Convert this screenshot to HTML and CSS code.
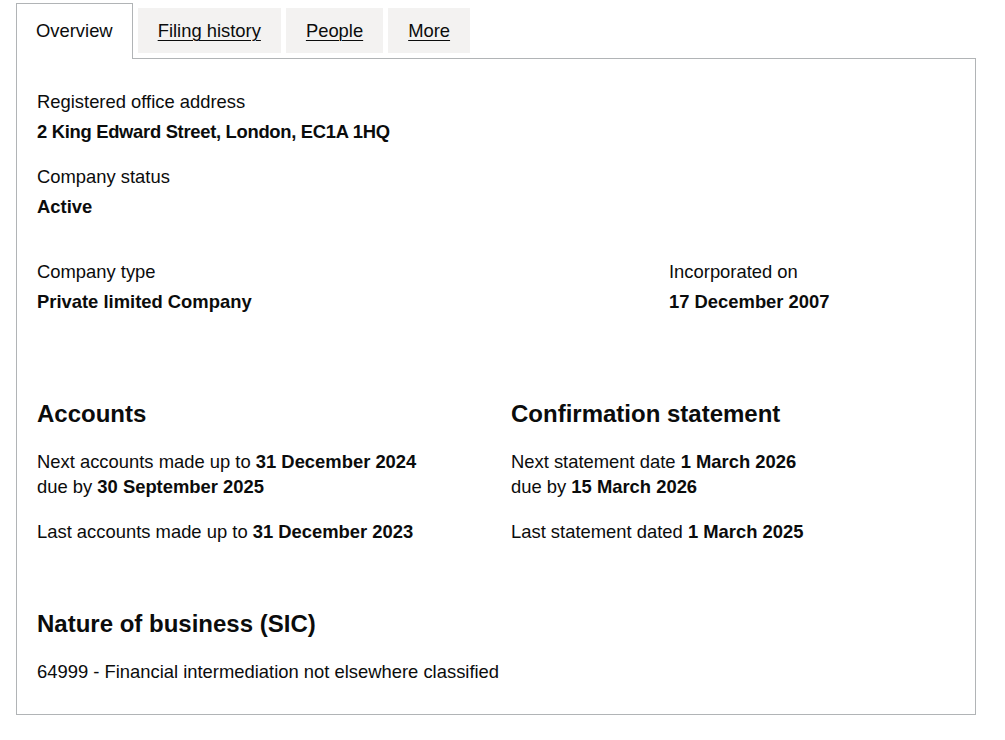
FILE: index.html
```html
<!DOCTYPE html>
<html lang="en">

<head>
    <meta charset="UTF-8">
    <meta name="viewport" content="width=device-width, initial-scale=1.0">
    <title>Company overview</title>
    <link rel="stylesheet" href="styles.css">
</head>

<body>

    <div class="page">
        <ul class="tabs">
            <li class="tab tab-selected"><a href="#overview">Overview</a></li>
            <li class="tab"><a href="#filing">Filing history</a></li>
            <li class="tab"><a href="#people">People</a></li>
            <li class="tab"><a href="#more">More</a></li>
        </ul>

        <div class="panel" id="overview">

            <!-- Address and status -->
            <dl class="details">
                <dt>Registered office address</dt>
                <dd>2 King Edward Street, London, EC1A 1HQ</dd>
                <dt>Company status</dt>
                <dd>Active</dd>
            </dl>

            <div class="row row-type">
                <dl class="col col-two-thirds">
                    <dt>Company type</dt>
                    <dd>Private limited Company</dd>
                </dl>
                <dl class="col col-one-third">
                    <dt>Incorporated on</dt>
                    <dd>17 December 2007</dd>
                </dl>
            </div>

            <!-- Accounts and confirmation statement -->
            <div class="row row-dates">
                <div class="col col-half">
                    <h2>Accounts</h2>
                    <p>Next accounts made up to <strong>31 December 2024</strong><br>
                        due by <strong>30 September 2025</strong></p>
                    <p>Last accounts made up to <strong>31 December 2023</strong></p>
                </div>
                <div class="col col-half">
                    <h2>Confirmation statement</h2>
                    <p>Next statement date <strong>1 March 2026</strong><br>
                        due by <strong>15 March 2026</strong></p>
                    <p>Last statement dated <strong>1 March 2025</strong></p>
                </div>
            </div>

            <h2>Nature of business (SIC)</h2>
            <p class="sic">64999 - Financial intermediation not elsewhere classified</p>
        </div>
    </div>

</body>
</html>
```

FILE: styles.css
```css
body {
    font-family: 'Liberation Sans', Arial, sans-serif;
    font-size: 18.4px;
    line-height: 25px;
    color: #0b0c0c;
    margin: 0;
    padding: 0;
    background-color: #fff;
}

.page {
    width: 960px;
    padding: 3px 0 0 16px;
}

/* Tabs */
.tabs {
    display: flex;
    align-items: flex-start;
    list-style: none;
    margin: 0;
    padding: 0;
}

.tab {
    margin: 5px 5px 5px 0;
    padding: 10px 20px;
    background-color: #f3f2f1;
}

.tab a {
    color: #0b0c0c;
    text-decoration: underline;
    text-decoration-thickness: 1px;
    text-underline-offset: 3px;
}

.tab-selected {
    position: relative;
    margin-top: 0;
    margin-bottom: -1px;
    padding: 14px 19px 16px;
    border: 1px solid #b1b4b6;
    border-bottom: 0;
    background-color: #fff;
}

.tab-selected a {
    text-decoration: none;
}

.panel {
    border: 1px solid #b1b4b6;
    padding: 30px 20px;
}

/* Details */
dl {
    margin: 0;
}

dt {
    margin-bottom: 5px;
}

dd {
    margin: 0 0 20px;
    font-weight: bold;
}

.details {
    margin-bottom: 40px;
}

.details dd:first-of-type {
    letter-spacing: -0.3px;
}

.row {
    display: flex;
    margin: 0 -15px;
}

.col {
    box-sizing: border-box;
    padding: 0 15px;
}

.col-two-thirds {
    width: 66.6667%;
}

.col-one-third {
    width: 33.3333%;
}

.col-half {
    width: 50%;
}

.row-type {
    margin-bottom: 65px;
}

.row-dates {
    margin-bottom: 45px;
}

h2 {
    font-family: 'Liberation Sans', Arial, sans-serif;
    font-size: 24px;
    line-height: 30px;
    margin: 0 0 20px;
}

p {
    margin: 0 0 20px;
}

.sic {
    margin-bottom: 0;
}
```
